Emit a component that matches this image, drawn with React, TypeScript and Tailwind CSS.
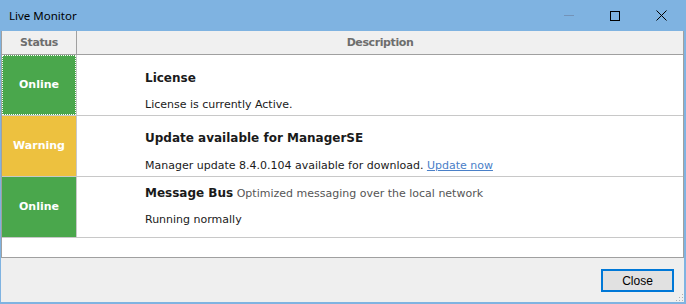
import React from "react";

const font = { fontFamily: "'DejaVu Sans', Tahoma, sans-serif" };

function Row({
  status,
  color,
  focused,
  children,
  pt,
}: {
  status: string;
  color: string;
  focused?: boolean;
  children: React.ReactNode;
  pt: string;
}) {
  return (
    <div className="flex h-[61px] border-b border-[#c8c8c8]">
      <div className={`w-[74px] shrink-0 ${color} flex`}>
        <div
          className={`flex-1 flex items-center justify-center text-white font-bold text-[11px] ${
            focused ? "border border-dotted border-white" : ""
          }`}
        >
          {status}
        </div>
      </div>
      <div className="w-px bg-[#c8c8c8]" />
      <div className={`flex-1 bg-white pl-[68px] ${pt} text-[11px] text-[#1a1a1a]`}>{children}</div>
    </div>
  );
}

export default function App() {
  return (
    <div className="w-[686px] h-[304px] bg-[#7fb3e1] flex flex-col pl-px pr-[2px] pb-[2px]" style={font}>
      <div className="h-[31px] shrink-0 flex items-center relative">
        <span
          className="ml-[8px] text-[11.5px] text-black"
          style={{ fontFamily: "'Noto Sans', 'Open Sans', sans-serif" }}
        >
          Live Monitor
        </span>
        <div className="absolute right-0 top-0 h-[31px] flex">
          <div className="w-[46px] flex items-center justify-center">
            <div className="w-[10px] h-px bg-[#7393b8]" />
          </div>
          <div className="w-[46px] flex items-center justify-center">
            <div className="w-[10px] h-[10px] border border-black" />
          </div>
          <div className="w-[46px] flex items-center justify-center">
            <svg width="11" height="11" viewBox="0 0 11 11">
              <path d="M0.5 0.5L10.5 10.5M10.5 0.5L0.5 10.5" stroke="black" strokeWidth="1" />
            </svg>
          </div>
        </div>
      </div>
      <div className="flex-1 flex flex-col bg-[#efefef]">
        <div className="h-[227px] border-x border-b border-[#a0a0a0] bg-white flex flex-col">
          <div className="h-[24px] shrink-0 flex bg-[#f0f0f0] border-b border-[#a0a0a0] text-[11px] font-bold text-[#6d6d6d] tracking-[-0.4px] pt-[2px]">
            <div className="w-[74px] flex items-center justify-center">Status</div>
            <div className="w-px bg-[#a0a0a0] -mt-[2px]" />
            <div className="flex-1 flex items-center justify-center">Description</div>
          </div>
          <Row status="Online" color="bg-[#4aa74c]" focused pt="pt-[16px]">
            <div className="font-bold text-[12px] leading-[15px]">License</div>
            <div className="mt-[12px] leading-[14px]">License is currently Active.</div>
          </Row>
          <Row status="Warning" color="bg-[#edc13f]" pt="pt-[15px]">
            <div className="font-bold text-[12px] leading-[15px]">Update available for ManagerSE</div>
            <div className="mt-[13px] leading-[14px]">
              Manager update 8.4.0.104 available for download.{" "}
              <span className="text-[#4a80c8] underline">Update now</span>
            </div>
          </Row>
          <Row status="Online" color="bg-[#4aa74c]" pt="pt-[9px]">
            <div className="leading-[15px]">
              <span className="font-bold text-[12px]">Message Bus</span>{" "}
              <span className="text-[#555] text-[11px]">Optimized messaging over the local network</span>
            </div>
            <div className="mt-[12px] leading-[14px]">Running normally</div>
          </Row>
        </div>
        <div className="flex-1 flex items-start justify-end pr-[10px] pt-[11px] relative">
          <button
            className="w-[73px] h-[23px] border-2 border-[#0078d7] bg-[#e1e1e1] text-[12px] text-black flex items-center justify-center"
            style={{ fontFamily: "Tahoma, 'Liberation Sans', sans-serif" }}
          >
            Close
          </button>
          <svg className="absolute right-0 bottom-0" width="8" height="8" viewBox="0 0 8 8">
            <rect x="6" y="0" width="1" height="1" fill="#b0b0b0" />
            <rect x="3" y="3" width="1" height="1" fill="#b0b0b0" />
            <rect x="6" y="3" width="1" height="1" fill="#b0b0b0" />
            <rect x="0" y="6" width="1" height="1" fill="#b0b0b0" />
            <rect x="3" y="6" width="1" height="1" fill="#b0b0b0" />
            <rect x="6" y="6" width="1" height="1" fill="#b0b0b0" />
          </svg>
        </div>
      </div>
    </div>
  );
}
